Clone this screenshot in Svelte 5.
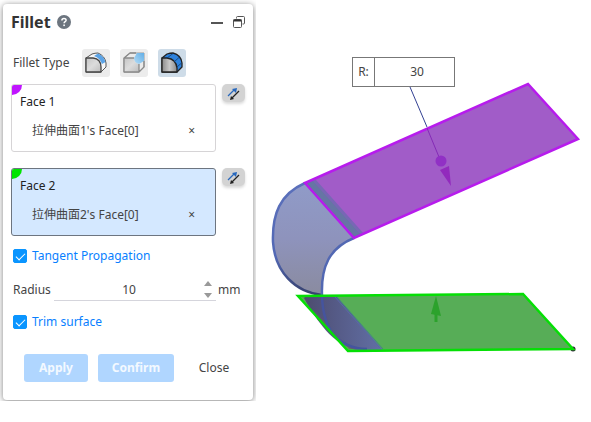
<script>
  let faces = $state([
    { id: 1, label: "Face 1", item: "拉伸曲面1's Face[0]", color: "magenta" },
    { id: 2, label: "Face 2", item: "拉伸曲面2's Face[0]", color: "green" },
  ]);
  let activeFace = $state(2);
  let filletType = $state("face");
  let tangent = $state(true);
  let trim = $state(true);
  let radius = $state("10");
  let dimension = $state("30");

  const types = [
    { id: "edge", label: "Edge fillet" },
    { id: "vertex", label: "Vertex fillet" },
    { id: "face", label: "Face fillet" },
  ];

  function step(delta) {
    radius = String((Number(radius) || 0) + delta);
  }

  function clearFace(face) {
    face.item = "";
  }
</script>

<div class="app">
  <aside class="dock">
    <form class="panel" onsubmit={(e) => e.preventDefault()}>
      <header>
        <h1>Fillet</h1>
        <button type="button" class="icon-button" aria-label="Help">
          <svg width="14" height="14" viewBox="0 0 14 14">
            <circle cx="7" cy="7" r="7" fill="#6c757f" />
            <path d="M4.9 5.4C4.9 2.8 9.1 2.9 9.1 5.2C9.1 6.7 7.1 6.6 7.1 8.3" fill="none" stroke="#fff" stroke-width="1.5" />
            <rect x="6.3" y="9.5" width="1.6" height="1.6" fill="#fff" />
          </svg>
        </button>
        <div class="window-tools">
          <button type="button" class="icon-button" aria-label="Minimize">
            <svg width="12" height="14" viewBox="0 0 12 14"><path d="M0 8H12" stroke="#555" stroke-width="2" /></svg>
          </button>
          <button type="button" class="icon-button" aria-label="Restore">
            <svg width="12" height="14" viewBox="0 0 12 14" fill="none" stroke="#555">
              <path d="M3.5 3.5V2.5Q3.5 1.5 4.5 1.5H10.5Q11.5 1.5 11.5 2.5V8Q11.5 9 10.5 9H9.5" />
              <rect x=".5" y="4.5" width="8" height="8" rx="1" />
              <path d="M.5 5.5H8.5" stroke="#333" stroke-width="2" />
            </svg>
          </button>
        </div>
      </header>

      <div class="type-row">
        <span>Fillet Type</span>
        {#each types as type}
          <button
            type="button"
            class="type"
            class:selected={filletType === type.id}
            aria-label={type.label}
            onclick={() => (filletType = type.id)}
          >
            <svg width="22" height="22" viewBox="0 0 22 22" stroke-linejoin="round">
              <defs>
                <linearGradient id="metal-{type.id}" x2="1" y2="1">
                  <stop stop-color="#c4c4c4" />
                  <stop offset=".5" stop-color="#dcdcdc" />
                  <stop offset="1" stop-color="#bcbcbc" />
                </linearGradient>
                <linearGradient id="steel">
                  <stop stop-color="#8c8c8c" />
                  <stop offset=".5" stop-color="#c8c8c8" />
                  <stop offset="1" stop-color="#8c8c8c" />
                </linearGradient>
                <linearGradient id="glass" x1="1" x2="0" y2="1">
                  <stop stop-color="#62aee6" />
                  <stop offset="1" stop-color="#b4dcf6" />
                </linearGradient>
              </defs>
              {#if type.id === "edge"}
                <path d="M1 6L7 2Q10 1 13 1Q20 4 21 11V15L16 20H1Z" fill="#f6f6f6" stroke="#555" />
                <path d="M9 4L13 1.500Q19 4 20.500 10L17 12Q15 6 9 4Z" fill="#5ba3e6" />
                <path d="M1 6H8Q16 7 16 15V20H1Z" fill="url(#metal-edge)" stroke="#444" stroke-width="1.300" />
              {:else if type.id === "vertex"}
                <path d="M1 6L7 1H21V15L16 20H1Z" fill="#ebebeb" stroke="#999" />
                <path d="M1 6H11Q11 11 16 12V20H1Z" fill="url(#metal-vertex)" />
                <path d="M11 6L14 1H21V9L16 12Q11 11 11 6Z" fill="url(#glass)" />
                <path d="M11 6H1V20H16V12M16 20L21 15V9M1 6L7 1H13" fill="none" stroke="#8a8a8a" stroke-width="1.300" />
              {:else}
                <path d="M1 6L6 2Q9 1 12 1Q20 3 21 11V15L16 20H1Z" fill="#2e82dc" stroke="#222" stroke-width="1.300" />
                <path d="M1 6H6Q15 7 16 16V20H1Z" fill="url(#steel)" stroke="#222" stroke-width="1.300" />
                <path d="M6 6L12 1.500M13 10L18.500 5M16 15L20.500 11" fill="none" stroke="#113d70" stroke-width=".8" />
              {/if}
            </svg>
          </button>
        {/each}
      </div>

      {#each faces as face (face.id)}
        <div class="face-row">
          <section class="face {face.color}" class:active={activeFace === face.id}>
            <button type="button" class="face-name" onclick={() => (activeFace = face.id)}>{face.label}</button>
            {#if face.item}
              <div class="face-item">
                <span>{face.item}</span>
                <button type="button" aria-label="Remove {face.label}" onclick={() => clearFace(face)}>×</button>
              </div>
            {/if}
          </section>
          <button type="button" class="flip" aria-label="Flip {face.label}">
            <svg width="13" height="13" viewBox="0 0 13 13">
              <path d="M1 9L7 3" stroke="#2868bd" stroke-width="1.300" />
              <path d="M5 2L10 1L9 6Z" fill="#2868bd" />
              <path d="M12 4L5 11" stroke="#222" stroke-width="1.300" />
              <path d="M7 12L3 13L4 9Z" fill="#222" />
            </svg>
          </button>
        </div>
      {/each}

      <label class="check">
        <input type="checkbox" bind:checked={tangent} />
        Tangent Propagation
      </label>

      <div class="radius-row">
        <label for="radius">Radius</label>
        <div class="number">
          <input id="radius" type="text" inputmode="decimal" bind:value={radius} />
          <div class="steps">
            <button type="button" aria-label="Increase radius" onclick={() => step(1)}>
              <svg width="8" height="5" viewBox="0 0 8 5"><path d="M0 5L4 0L8 5Z" fill="#999" /></svg>
            </button>
            <button type="button" aria-label="Decrease radius" onclick={() => step(-1)}>
              <svg width="8" height="5" viewBox="0 0 8 5"><path d="M0 0H8L4 5Z" fill="#999" /></svg>
            </button>
          </div>
        </div>
        <span>mm</span>
      </div>

      <label class="check">
        <input type="checkbox" bind:checked={trim} />
        Trim surface
      </label>

      <footer>
        <button type="submit" class="primary" disabled>Apply</button>
        <button type="button" class="primary confirm" disabled>Confirm</button>
        <button type="button" class="close">Close</button>
      </footer>
    </form>
  </aside>

  <main class="viewport">
    <svg class="model" width="335" height="400" viewBox="256 0 335 400" role="img" aria-label="Fillet preview">
      <defs>
        <linearGradient id="bend" x1="0" y1="0" x2="0" y2="1">
          <stop stop-color="#909bc8" />
          <stop offset=".5" stop-color="#8e93bc" />
          <stop offset="1" stop-color="#8a8b9f" />
        </linearGradient>
        <linearGradient id="under" x1="0" y1="0" x2="1" y2="0">
          <stop stop-color="#4d4c6e" />
          <stop offset=".4" stop-color="#555a86" />
          <stop offset="1" stop-color="#6270a5" />
        </linearGradient>
        <linearGradient id="rim" x1="0" y1="0" x2="0" y2="1">
          <stop stop-color="#5b70bb" />
          <stop offset=".65" stop-color="#5268b5" />
          <stop offset="1" stop-color="#36406c" />
        </linearGradient>
      </defs>

      <path d="M305 183C280 194 272 214 273 242C275 272 295 292 322 295C321 266 329 248 354 238Z" fill="url(#bend)" />
      <path d="M305 183C280 194 272 214 273 242C275 272 295 292 322 295" fill="none" stroke="url(#rim)" stroke-width="2.500" />
      <path d="M354 238C329 248 321 267 322 295" fill="none" stroke="#5268b3" stroke-width="2.500" />

      <path d="M305 183L528 84L578 139L354 238Z" fill="#a15cc8" />
      <path d="M305 183L314 179L362 235L354 238Z" fill="#6675a4" />
      <path d="M314 180L362 234" stroke="#7867b5" stroke-width="3" />
      <path d="M305 183L528 84L578 139L354 238Z" fill="none" stroke="#b71bed" stroke-width="2.500" />
      <path d="M410 87L427 127" stroke="#334193" />
      <path d="M427 128L439 157" stroke="#842bb6" />
      <circle cx="441" cy="161" r="5.500" fill="#9130c5" />
      <path d="M440 170L449 166L451 186Z" fill="#922abd" />

      <path d="M298 296L523 294L573 349L348 351Z" fill="#57ad57" />
      <path d="M305 297H337L383 350H356C333 344 318 323 304 298Z" fill="url(#under)" />
      <path d="M303 297C318 311 327 337 359 349L349 349Z" fill="#655b65" opacity=".7" />
      <path d="M322 296C323 327 335 348 367 349" fill="none" stroke="#45549e" stroke-width="2.500" />
      <path d="M337 297L383 349" stroke="#438982" />
      <path d="M335 297L380 348" stroke="#5869a8" />
      <path d="M436 322V304" stroke="#2ca22c" stroke-width="3" />
      <path d="M436 296L431 314L441 316Z" fill="#2ca22c" />
      <circle cx="573" cy="349" r="2.500" fill="#35213a" />
      <path d="M298 296L523 294L573 349L348 351Z" fill="none" stroke="#05df05" stroke-width="2.500" />
    </svg>
    <div class="dimension">
      <label for="dimension">R:</label>
      <input id="dimension" type="text" bind:value={dimension} />
    </div>
  </main>
</div>

<style>
  :global(body) {
    margin: 0;
    background: #fff;
  }

  .app {
    display: flex;
    align-items: flex-start;
    font-family: "Noto Sans", "Noto Sans CJK SC", sans-serif;
    font-size: 12px;
    line-height: 18px;
    color: #444;
  }

  button,
  input {
    margin: 0;
    padding: 0;
    border: 0;
    background: none;
    color: inherit;
    font: inherit;
  }

  button:not(:disabled) {
    cursor: pointer;
  }

  svg {
    display: block;
  }

  .dock {
    flex: none;
    box-sizing: border-box;
    width: 256px;
    padding: 4px 3px 1px;
    overflow: hidden;
  }

  .panel {
    box-sizing: border-box;
    padding: 5px 8px 18px;
    border-radius: 4px;
    background: #fff;
    box-shadow: 0 1px 6px rgba(0, 0, 0, 0.5);
  }

  header {
    display: flex;
    align-items: center;
    gap: 6px;
    height: 26px;
  }

  h1 {
    margin: 0;
    font-size: 16px;
    line-height: 26px;
    font-weight: 700;
    color: #333;
  }

  .window-tools {
    display: flex;
    gap: 10px;
    margin-left: auto;
  }

  .type-row {
    display: flex;
    align-items: center;
    gap: 10px;
    margin-top: 14px;
    padding-left: 2px;
  }

  .type-row > span {
    width: 59px;
  }

  .type {
    display: grid;
    place-items: center;
    width: 28px;
    height: 28px;
    border-radius: 3px;
    background: #ececec;
  }

  .type.selected {
    background: #cedce8;
  }

  .face-row {
    display: flex;
    align-items: flex-start;
    gap: 6px;
    margin-top: 7px;
  }

  .face-row + .face-row {
    margin-top: 16px;
  }

  .face {
    position: relative;
    flex: 1;
    box-sizing: border-box;
    min-height: 68px;
    padding: 8px;
    border: 1px solid #d6d4d6;
    border-radius: 3px;
    overflow: hidden;
  }

  .face.active {
    border-color: #6d7580;
    background: #d4e8ff;
  }

  /* coloured corner tag */
  .face::before {
    content: "";
    position: absolute;
    top: 0;
    left: 0;
    width: 10px;
    height: 10px;
    border-bottom-right-radius: 10px;
  }

  .magenta::before {
    background: #c014ff;
  }

  .green::before {
    background: #00e500;
  }

  .face-name {
    display: block;
    color: #222;
  }

  .face-item {
    display: flex;
    justify-content: space-between;
    margin-top: 11px;
    padding: 0 12px;
  }

  .flip {
    display: grid;
    place-items: center;
    width: 23px;
    height: 18px;
    border-radius: 5px;
    background: #d3d3d3;
    box-shadow: 0 2px 3px rgba(0, 0, 0, 0.15);
  }

  .check {
    display: flex;
    align-items: center;
    gap: 5px;
    width: max-content;
    margin-top: 11px;
    padding-left: 2px;
    color: #087fff;
  }

  .check input {
    appearance: none;
    display: grid;
    place-items: center;
    box-sizing: border-box;
    width: 14px;
    height: 14px;
    border: 1px solid #0a95ff;
    border-radius: 2px;
  }

  .check input:checked {
    background: #0a95ff;
  }

  .check input:checked::before {
    content: "";
    box-sizing: border-box;
    width: 9px;
    height: 5px;
    margin-bottom: 2px;
    border: solid #fff;
    border-width: 0 0 1px 1px;
    transform: rotate(-45deg);
  }

  .radius-row {
    display: grid;
    grid-template-columns: 39px 1fr 27px;
    align-items: center;
    gap: 2px;
    margin-top: 13px;
    padding-left: 2px;
  }

  .number {
    display: flex;
    align-items: center;
    min-width: 0;
    border-bottom: 1px solid #d5d5dc;
  }

  .number input {
    flex: 1;
    min-width: 0;
    width: 0;
    height: 22px;
    text-align: center;
  }

  .steps {
    display: grid;
    gap: 7px;
    padding-right: 4px;
  }

  .radius-row + .check {
    margin-top: 12px;
  }

  footer {
    display: flex;
    gap: 10px;
    margin-top: 23px;
    padding-left: 13px;
  }

  footer button {
    width: 64px;
    height: 28px;
    border-radius: 3px;
  }

  footer .confirm {
    width: 76px;
  }

  .primary {
    background: #b0d6ff;
    color: #f3f9ff;
    font-weight: 700;
  }

  footer .close {
    width: 60px;
  }

  .viewport {
    position: relative;
    flex: 1;
    min-width: 0;
    overflow: hidden;
  }

  /* dimension callout pinned to its leader line */
  .dimension {
    position: absolute;
    top: 57px;
    left: 96px;
    display: flex;
    box-sizing: border-box;
    width: 103px;
    height: 30px;
    border: 1px solid #777;
    background: #fff;
    line-height: 28px;
  }

  .dimension label {
    width: 21px;
    border-right: 1px solid #777;
    text-align: center;
  }

  .dimension input {
    flex: 1;
    min-width: 0;
    padding-left: 5px;
    text-align: center;
  }
</style>
